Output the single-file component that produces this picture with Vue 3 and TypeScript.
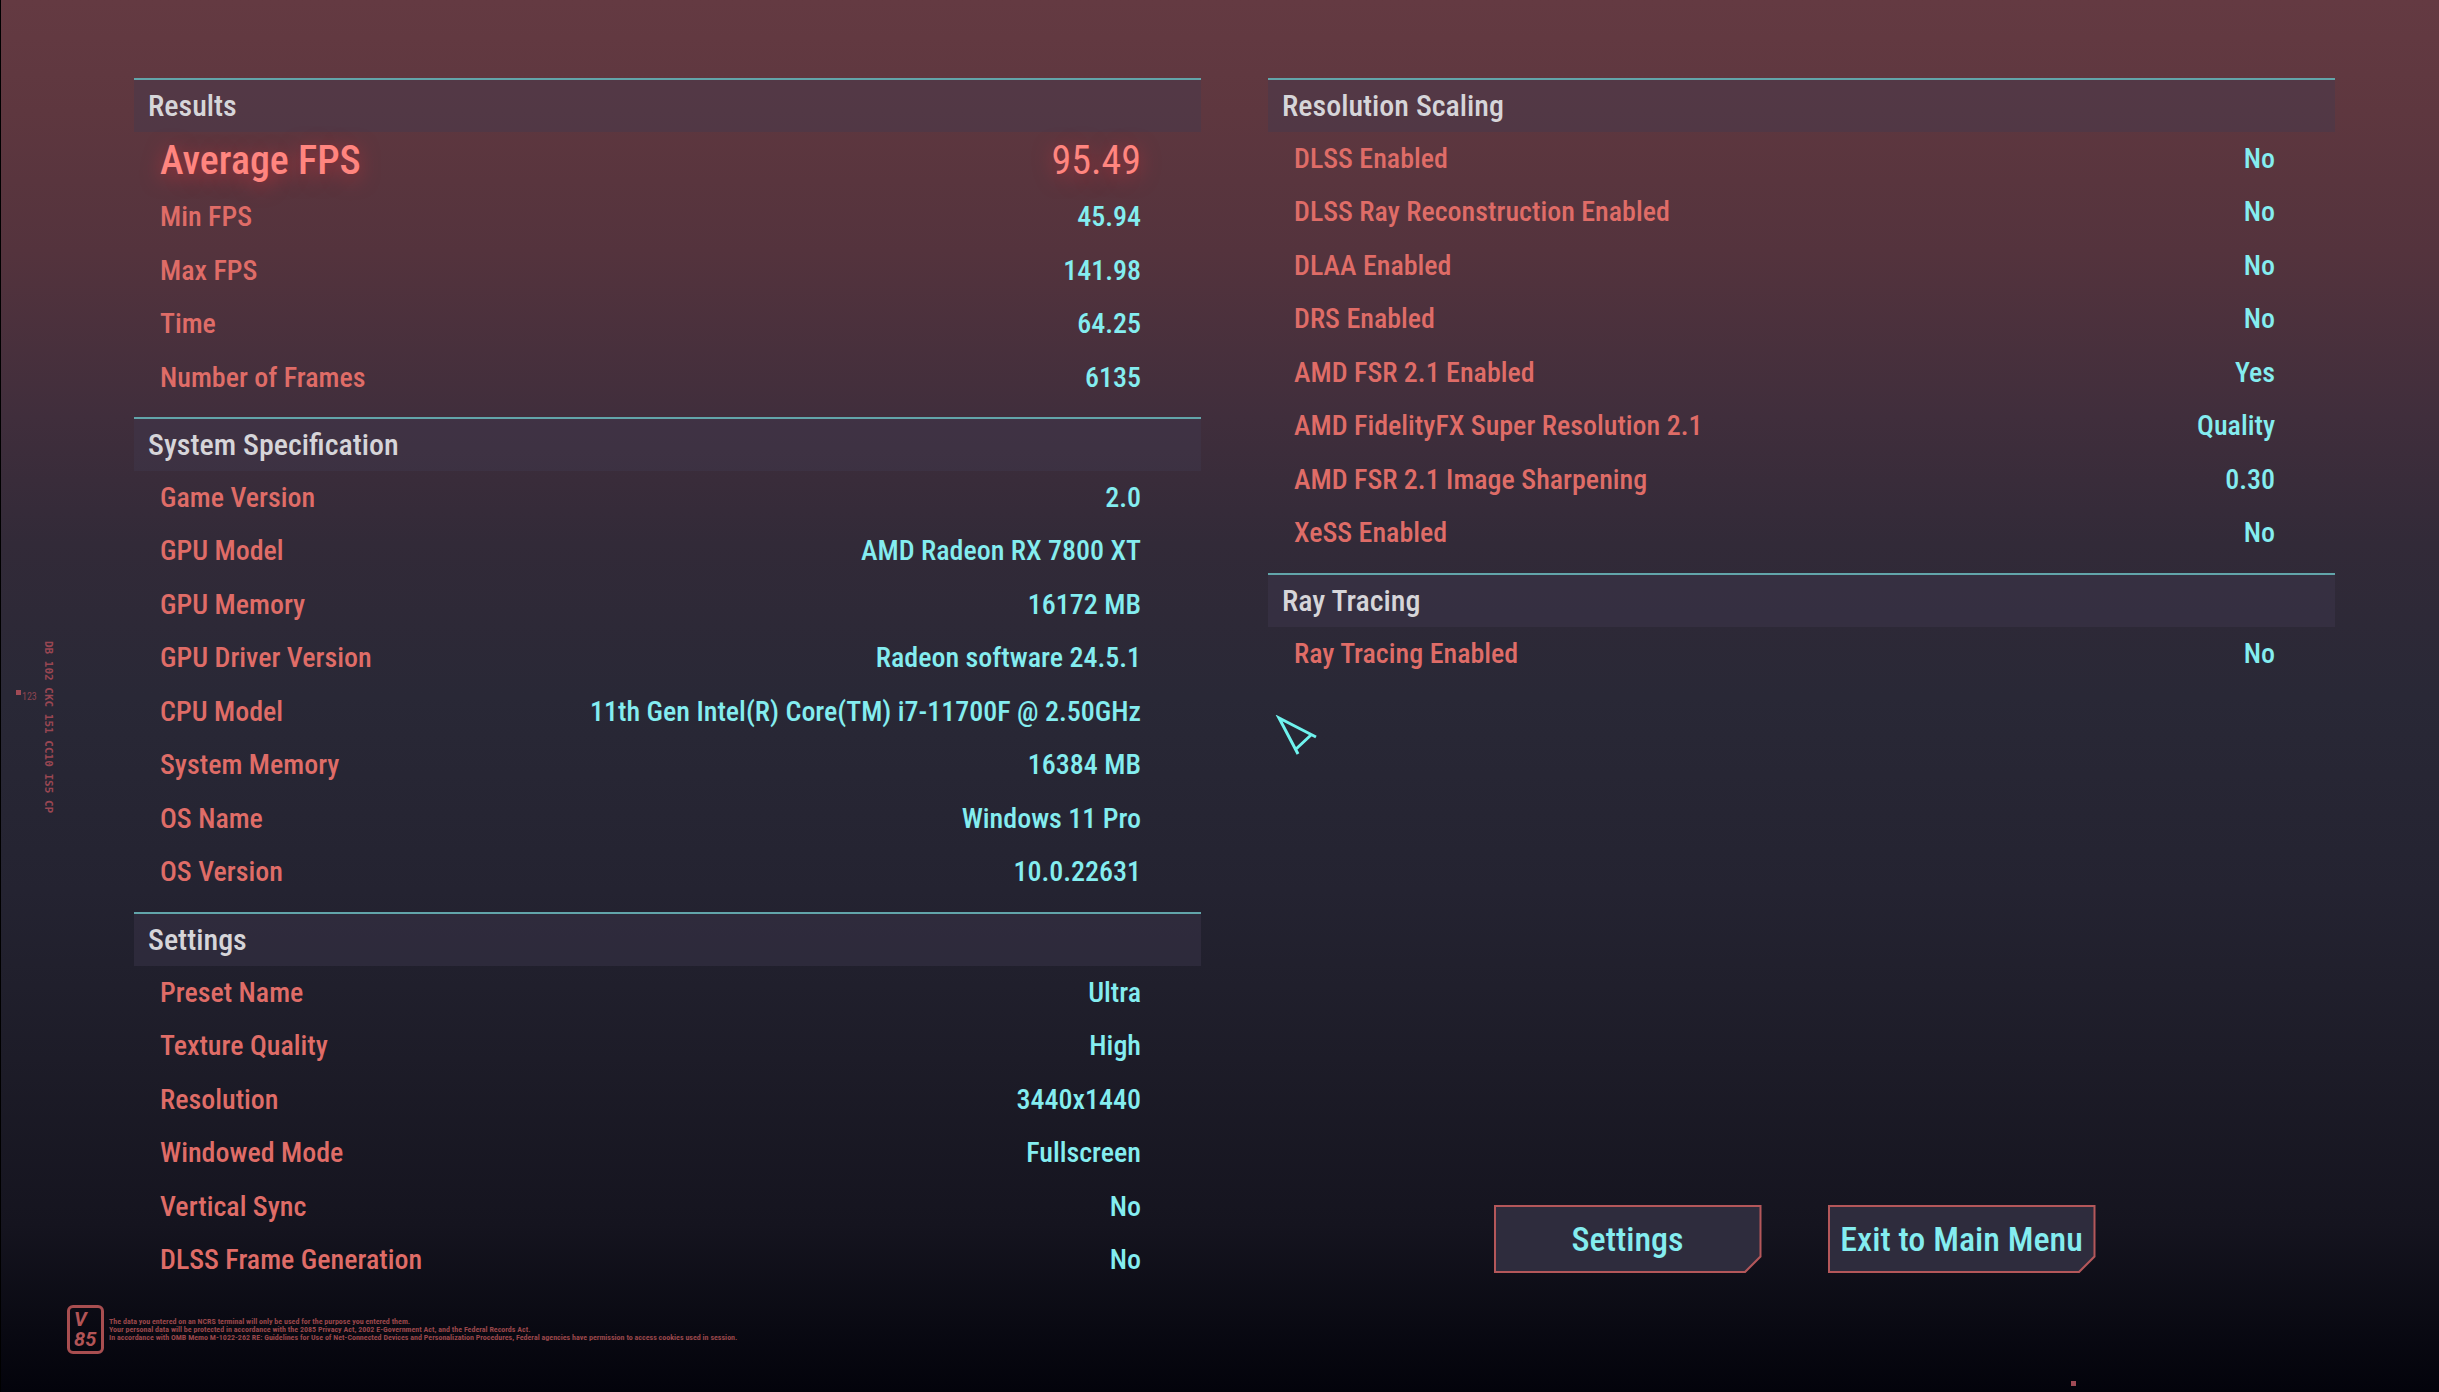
<script setup lang="ts">
interface Row {
  label: string
  value: string
  highlight?: boolean
}
interface Section {
  title: string
  rows: Row[]
}

const row = (label: string, value: string, highlight = false): Row => ({ label, value, highlight })

const columns: Section[][] = [
  [
    {
      title: 'Results',
      rows: [
        row('Average FPS', '95.49', true),
        row('Min FPS', '45.94'),
        row('Max FPS', '141.98'),
        row('Time', '64.25'),
        row('Number of Frames', '6135'),
      ],
    },
    {
      title: 'System Specification',
      rows: [
        row('Game Version', '2.0'),
        row('GPU Model', 'AMD Radeon RX 7800 XT'),
        row('GPU Memory', '16172 MB'),
        row('GPU Driver Version', 'Radeon software 24.5.1'),
        row('CPU Model', '11th Gen Intel(R) Core(TM) i7-11700F @ 2.50GHz'),
        row('System Memory', '16384 MB'),
        row('OS Name', 'Windows 11 Pro'),
        row('OS Version', '10.0.22631'),
      ],
    },
    {
      title: 'Settings',
      rows: [
        row('Preset Name', 'Ultra'),
        row('Texture Quality', 'High'),
        row('Resolution', '3440x1440'),
        row('Windowed Mode', 'Fullscreen'),
        row('Vertical Sync', 'No'),
        row('DLSS Frame Generation', 'No'),
      ],
    },
  ],
  [
    {
      title: 'Resolution Scaling',
      rows: [
        row('DLSS Enabled', 'No'),
        row('DLSS Ray Reconstruction Enabled', 'No'),
        row('DLAA Enabled', 'No'),
        row('DRS Enabled', 'No'),
        row('AMD FSR 2.1 Enabled', 'Yes'),
        row('AMD FidelityFX Super Resolution 2.1', 'Quality'),
        row('AMD FSR 2.1 Image Sharpening', '0.30'),
        row('XeSS Enabled', 'No'),
      ],
    },
    {
      title: 'Ray Tracing',
      rows: [row('Ray Tracing Enabled', 'No')],
    },
  ],
]
</script>

<template>
  <div class="screen">
    <main class="columns">
      <div v-for="(sections, index) in columns" :key="index" class="column">
        <section v-for="section in sections" :key="section.title" class="section">
          <h2 class="title">{{ section.title }}</h2>
          <table class="stats">
            <tbody>
              <tr v-for="item in section.rows" :key="item.label" :class="{ highlight: item.highlight }">
                <th scope="row">{{ item.label }}</th>
                <td>{{ item.value }}</td>
              </tr>
            </tbody>
          </table>
        </section>
        <div v-if="index === 1" class="actions">
          <button type="button" class="action">Settings</button>
          <button type="button" class="action">Exit to Main Menu</button>
        </div>
      </div>
    </main>

    <footer class="footer">
      <div class="badge"><span>V</span><span>85</span></div>
      <p class="legal">
        The data you entered on an NCRS terminal will only be used for the purpose you entered them.<br />
        Your personal data will be protected in accordance with the 2085 Privacy Act, 2002 E-Government Act, and the Federal Records Act.<br />
        In accordance with OMB Memo M-1022-262 RE: Guidelines for Use of Net-Connected Devices and Personalization Procedures, Federal agencies have permission to access cookies used in session.
      </p>
    </footer>

    <div class="side-mark"><i class="dot"></i><span>123</span></div>
    <div class="side-code">DB 102 CKC 151 CC10 IS5 CP</div>
    <i class="dot corner-dot"></i>
    <svg class="cursor" width="44" height="44" viewBox="0 0 44 44" aria-hidden="true">
      <path d="M41 22 L4 3 L23 39 M36 20 L21 34" />
    </svg>
  </div>
</template>

<style>
body {
  margin: 0;
  background: #03030b;
}
</style>

<style scoped>
.screen {
  position: relative;
  box-sizing: border-box;
  min-height: 100vh;
  overflow: hidden;
  padding-top: 78px;
  border-left: 1px solid #000;
  background: linear-gradient(
    #643a42 0%,
    #5e373f 8%,
    #54333d 18%,
    #402e3c 30%,
    #322a38 39%,
    #292836 50%,
    #242331 64%,
    #1d1c28 76%,
    #15141f 88%,
    #0a0a13 95%,
    #03030b 100%
  );
  font-family: 'Roboto Condensed', 'Liberation Sans Narrow', Roboto, sans-serif;
  font-size: 28px;
  font-weight: 500;
}
.columns {
  display: grid;
  grid-template-columns: 1fr 1fr;
  column-gap: 67px;
  padding: 0 104px 0 133px;
}
.column {
  display: flex;
  flex-direction: column;
  gap: 13px;
}
.title {
  box-sizing: border-box;
  height: 54px;
  margin: 0;
  padding-left: 14px;
  border-top: 2px solid #62a5aa;
  background: rgba(64, 58, 80, 0.4);
  color: #d6d5d9;
  font-size: 30px;
  font-weight: 500;
  line-height: 52px;
}
.stats {
  width: 100%;
  border-collapse: collapse;
}
.stats tr {
  height: 53px;
}
.stats tr:nth-child(even) {
  height: 54px;
}
.stats th,
.stats td {
  padding: 0 60px 0 26px;
  line-height: 32px;
  font-weight: 500;
  white-space: nowrap;
}
.stats th {
  color: #df6c67;
  text-align: left;
}
.stats td {
  color: #84edf0;
  text-align: right;
}
.stats .highlight {
  height: 58px;
}
.stats .highlight th,
.stats .highlight td {
  color: #ff857f;
  font-size: 40px;
  text-shadow: 0 4px 20px rgba(255, 50, 60, 0.5);
}
.stats .highlight td {
  font-weight: 400;
}
.actions {
  display: flex;
  justify-content: center;
  gap: 66px;
  margin-top: auto;
  padding: 0 14px 14px 0;
}
.action {
  position: relative;
  isolation: isolate;
  width: 268px;
  height: 68px;
  padding: 0;
  border: 0;
  background: #b4575a;
  clip-path: polygon(0 0, 100% 0, 100% calc(100% - 16px), calc(100% - 16px) 100%, 0 100%);
  color: #84edf0;
  font-family: inherit;
  font-size: 34px;
  font-weight: 500;
  line-height: 36px;
}
.action::before {
  content: '';
  position: absolute;
  z-index: -1;
  inset: 2px;
  background: #2e2c3d;
  clip-path: polygon(0 0, 100% 0, 100% calc(100% - 15px), calc(100% - 15px) 100%, 0 100%);
}
.footer {
  display: flex;
  align-items: center;
  gap: 5px;
  padding: 18px 0 0 66px;
  color: #98464a;
}
.badge {
  display: flex;
  flex-direction: column;
  box-sizing: border-box;
  width: 37px;
  height: 49px;
  padding: 1px 0 0 4px;
  border: 3px solid #a84e50;
  border-radius: 6px;
  color: #b25456;
  font-family: Roboto, sans-serif;
  font-size: 20px;
  font-style: italic;
  font-weight: 700;
  line-height: 20px;
}
.legal {
  margin: 0;
  font-size: 8px;
  font-weight: 700;
  line-height: 8px;
  white-space: nowrap;
}
.dot {
  display: block;
  width: 5px;
  height: 5px;
  background: #a04a55;
}
.side-mark {
  position: absolute;
  top: 690px;
  left: 15px;
  display: flex;
  gap: 1px;
  color: #8d4450;
  font-size: 10px;
  font-weight: 400;
  line-height: 14px;
}
.side-code {
  position: absolute;
  top: 641px;
  left: 41px;
  color: #994652;
  font-family: 'DejaVu Sans Mono', monospace;
  font-size: 11px;
  font-weight: 700;
  line-height: 12px;
  writing-mode: vertical-rl;
  white-space: nowrap;
}
.corner-dot {
  position: absolute;
  right: 363px;
  bottom: 6px;
}
.cursor {
  position: absolute;
  top: 715px;
  left: 1274px;
  fill: none;
  stroke: #6ff3ee;
  stroke-width: 3;
}
</style>
